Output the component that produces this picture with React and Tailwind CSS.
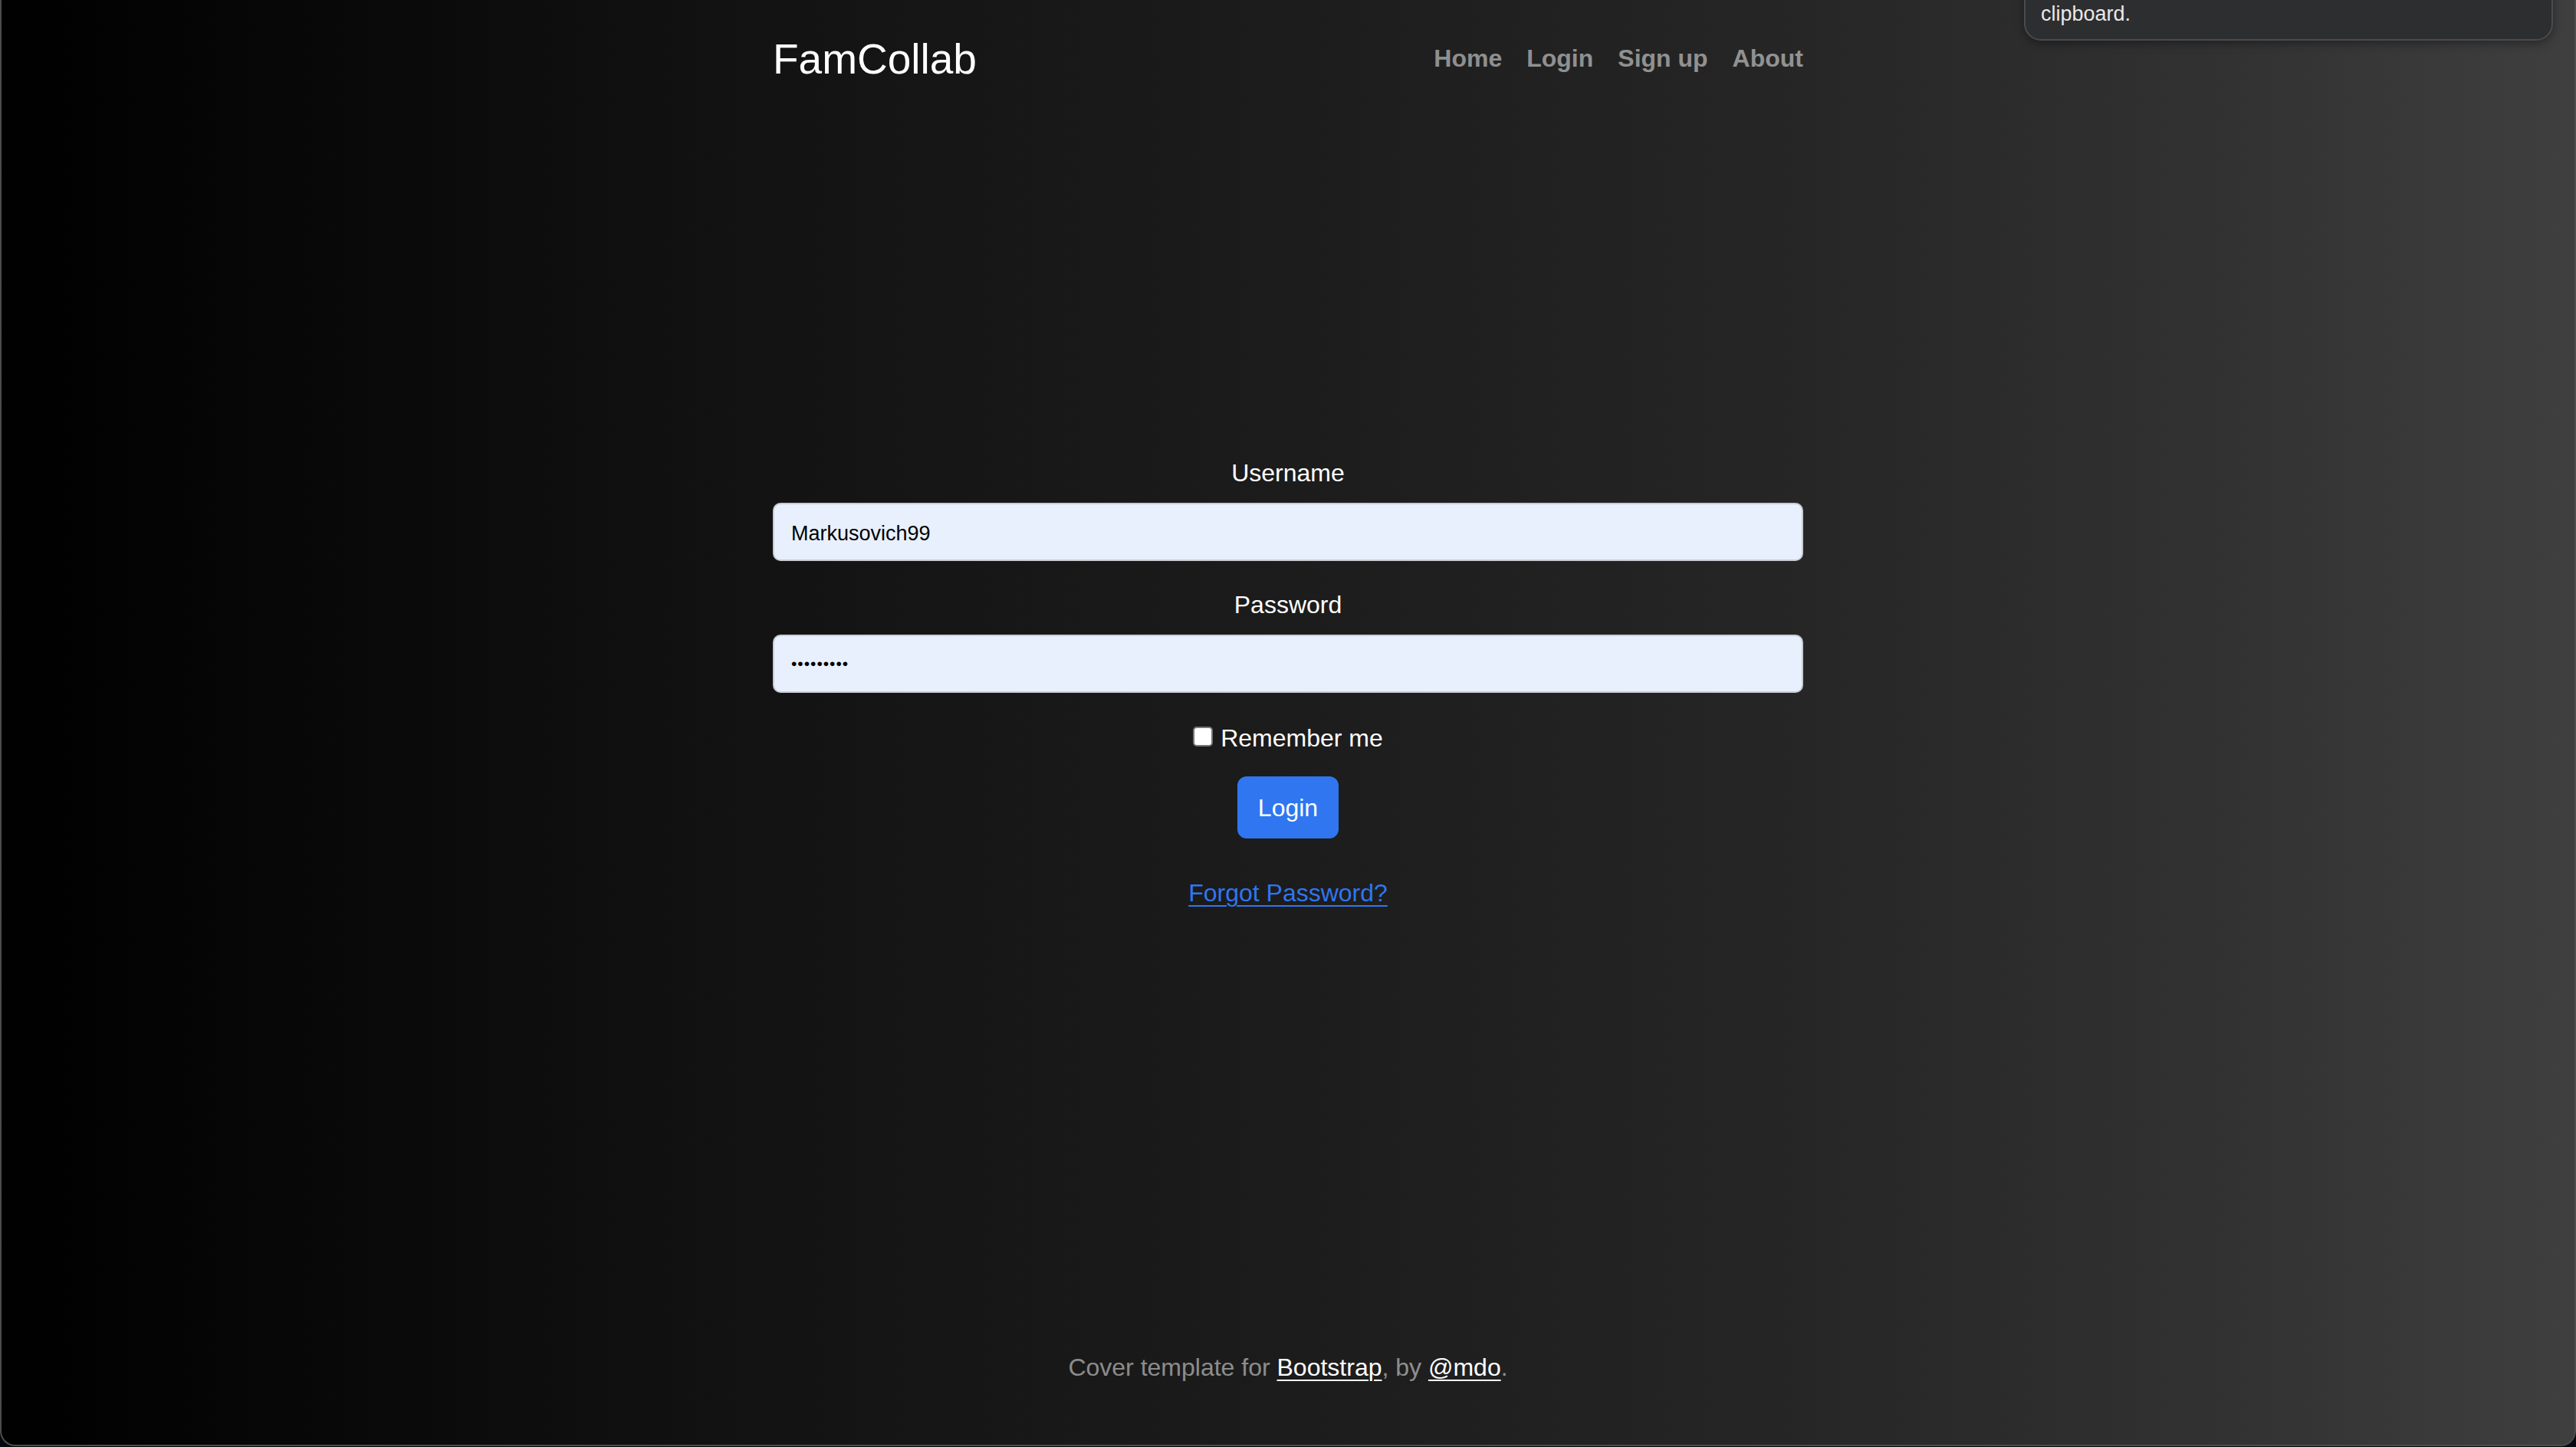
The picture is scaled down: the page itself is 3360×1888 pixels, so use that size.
import React, { useState } from 'react';

const font = { fontFamily: '"Liberation Sans", Arial, sans-serif' };

export default function App() {
    const [username, setUsername] = useState('Markusovich99');
    const [password, setPassword] = useState('abcdefghi');
    const [remember, setRemember] = useState(false);

    return (
        <div className="h-[1888px] w-[3360px] overflow-hidden bg-[#050a10]" style={font}>
            <div className="relative flex h-[1887px] flex-col rounded-b-[20px] border-x-2 border-b-2 border-[#4d4d4d] bg-[linear-gradient(90deg,#000_0%,#121212_28%,#1c1c1c_50%,#262626_70%,#333333_88%,#3f3f3f_100%)] text-white">
                {/* Header */}
                <header className="mx-auto flex w-[1344px] items-start justify-between pt-[44px]">
                    <h3 className="text-[55px] font-normal leading-[67px] text-white">FamCollab</h3>
                    <nav className="flex gap-[32px]">
                        {['Home', 'Login', 'Sign up', 'About'].map((item) => (
                            <a key={item} href="#" className="py-[8px] text-[32px] font-bold leading-[48px] text-white/50">
                                {item}
                            </a>
                        ))}
                    </nav>
                </header>

                {/* Login form */}
                <main className="mx-auto mt-[482px] flex w-[1344px] flex-col items-center">
                    <label className="text-[32px] leading-[48px]">Username</label>
                    <input
                        value={username}
                        onChange={(e) => setUsername(e.target.value)}
                        className="mt-[15px] h-[76px] w-full rounded-[10px] border-2 border-[#c8ccd2] bg-[#e8f0fe] px-[22px] pt-[4px] text-[27px] text-black outline-none"
                        style={font}
                    />
                    <label className="mt-[33px] text-[32px] leading-[48px]">Password</label>
                    <input
                        type="password"
                        value={password}
                        onChange={(e) => setPassword(e.target.value)}
                        className="mt-[15px] h-[76px] w-full rounded-[10px] border-2 border-[#c8ccd2] bg-[#e8f0fe] px-[22px] text-[21px] tracking-[1px] text-black outline-none"
                        style={font}
                    />
                    <label className="mt-[35px] flex h-[48px] items-center gap-[10px] text-[32px] leading-[48px]">
                        <input
                            type="checkbox"
                            checked={remember}
                            onChange={(e) => setRemember(e.target.checked)}
                            className="mt-[-4px] h-[26px] w-[26px] appearance-none rounded-[5px] border-2 border-[#767676] bg-white checked:bg-[#2f76f0]"
                        />
                        Remember me
                    </label>
                    <button className="mt-[26px] flex h-[81px] w-[132px] items-center justify-center rounded-[12px] bg-[#2f76f0] text-[32px] text-white">
                        Login
                    </button>
                    <a href="#" className="mt-[47px] text-[32px] leading-[48px] text-[#2f76f0] underline decoration-2 underline-offset-[5px]">
                        Forgot Password?
                    </a>
                </main>

                {/* Footer */}
                <footer className="mt-auto pb-[77px] text-center text-[32px] leading-[48px] text-white/50">
                    Cover template for{' '}
                    <a href="#" className="text-white underline decoration-2 underline-offset-[5px]">Bootstrap</a>, by{' '}
                    <a href="#" className="text-white underline decoration-2 underline-offset-[5px]">@mdo</a>.
                </footer>

                {/* System notification peeking in */}
                <div className="absolute left-[2638px] top-[-60px] flex h-[113px] w-[690px] flex-col justify-end rounded-[22px] border-2 border-[#4a4b4d] bg-[#2d2e30] px-[20px] pb-[17px] shadow-[0_4px_12px_rgba(0,0,0,0.35)]">
                    <span className="text-[27px] leading-[32px] text-[#e8e8e8]">clipboard.</span>
                </div>
            </div>
        </div>
    );
}
